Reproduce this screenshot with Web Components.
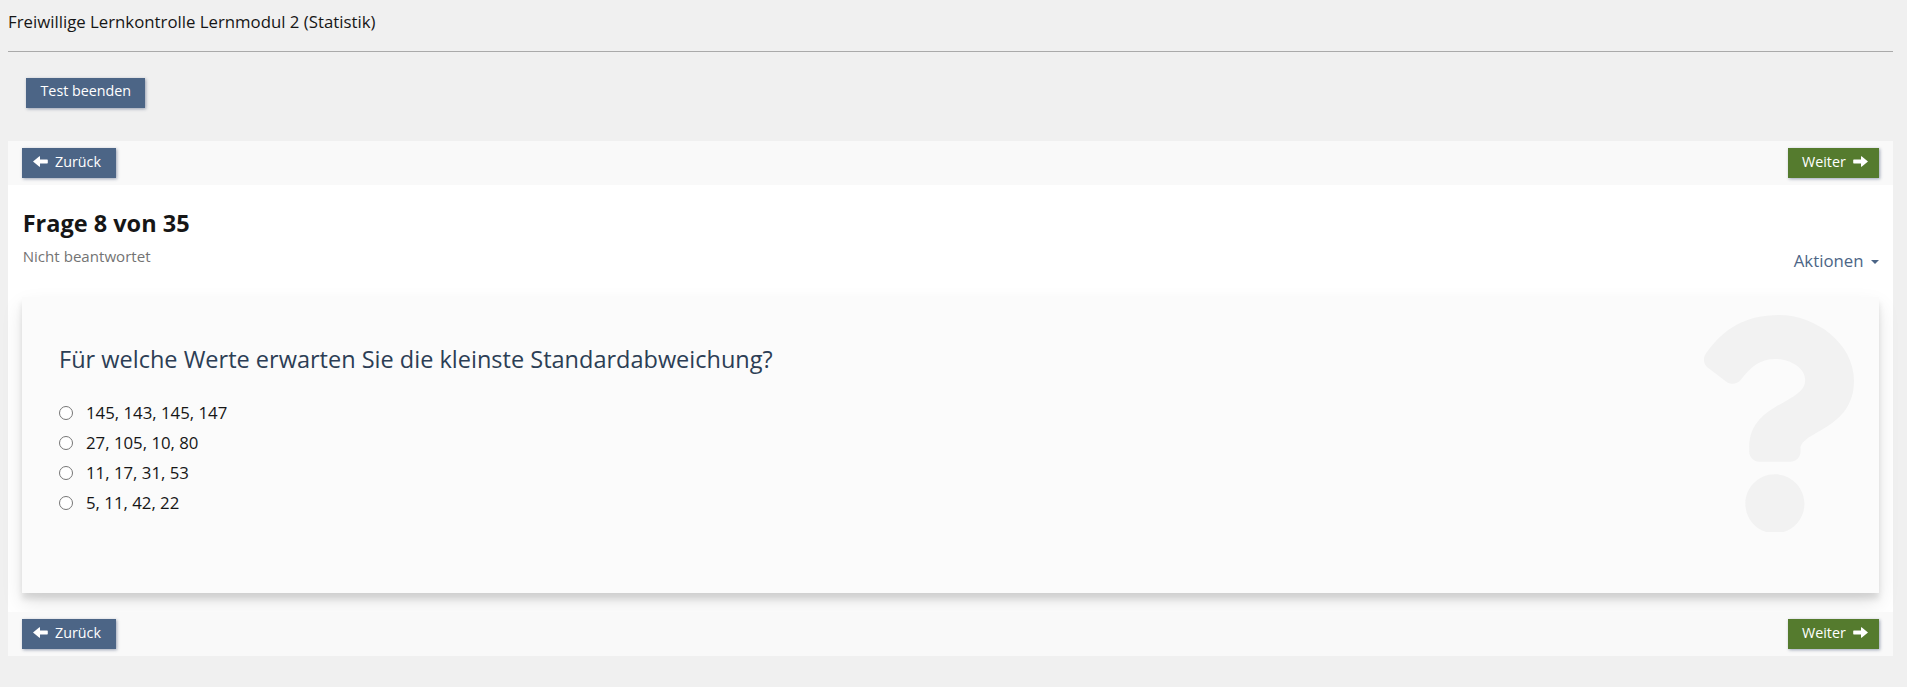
<!DOCTYPE html>
<html lang="de">
<head>
<meta charset="utf-8">
<title>Freiwillige Lernkontrolle</title>
<style>
body { margin: 0; background: #f0f0f0; font: 16.8px/24px "Open Sans", sans-serif; color: #161616; }
</style>
</head>
<body>
<test-page></test-page>
<script>
const define = (name, html) => {
  const tpl = document.createElement('template');
  tpl.innerHTML = html;
  customElements.define(name, class extends HTMLElement {
    constructor() {
      super();
      this.attachShadow({ mode: 'open' }).append(tpl.content.cloneNode(true));
    }
  });
};

define('arrow-icon', `
<style>
:host { display: block; width: 15px; height: 11px; }
:host([right]) { transform: scaleX(-1); }
svg { display: block; fill: #fff; }
</style>
<svg width="15" height="11" viewBox="0 0 15 11"><path d="M0 5.5L6.4 0.2Q7 0 7 .6V3.6H14.2Q14.8 3.6 14.8 4.2V6.8Q14.8 7.4 14.2 7.4H7V10.4Q7 11 6.4 10.8Z"/></svg>`);

define('action-button', `
<style>
:host { display: flex; box-sizing: border-box; height: 30px; padding: 3px 15px 0 11px; background: #4c6586; color: #fff;
  font-size: 14.3px; line-height: 21px; white-space: nowrap; box-shadow: 1px 1px 3px rgba(44,62,100,.45); }
:host([primary]) { padding: 3px 11px 0 14px; background: #557b2e; }
:host([plain]) { padding: 2px 14px 0 14.5px; }
::slotted(arrow-icon) { margin-top: 5px; }
</style>
<slot name="before"></slot><span><slot></slot></span><slot name="after"></slot>`);

define('nav-bar', `
<style>
:host { display: flex; justify-content: space-between; height: 44px; padding: 7px 14px; box-sizing: border-box; background: #f9f9f9; position: relative; }
.back { width: 94px; } .next { width: 91px; justify-content: space-between; }
.back arrow-icon { margin-right: 7px; }
</style>
<action-button class="back"><arrow-icon slot="before"></arrow-icon>Zurück</action-button>
<action-button class="next" primary>Weiter<arrow-icon slot="after" right></arrow-icon></action-button>`);

define('question-head', `
<style>
:host { display: flex; justify-content: space-between; height: 112px; padding: 0 14px; box-sizing: border-box; }
h1 { margin: 21.5px 0 0 .7px; font-size: 23.5px; line-height: 32px; font-weight: 700; }
p { margin: 7.5px 0 0 .7px; font-size: 15.1px; line-height: 20px; color: #737373; }
.menu { display: flex; align-items: flex-start; margin-top: 64px; color: #4c6586; }
i { border: 4px solid transparent; border-top-color: #4c6586; border-bottom: 0; margin: 11px 0 0 7.5px; }
</style>
<div><h1>Frage 8 von 35</h1><p>Nicht beantwortet</p></div>
<div class="menu"><span>Aktionen</span><i></i></div>`);

define('answer-option', `
<style>
:host { display: flex; height: 30px; align-items: flex-start; }
input { width: 14px; height: 14px; margin: 5px 13px 0 0; appearance: none; border: 1px solid #767676; border-radius: 50%; background: #fff; }
</style>
<input type="radio" name="a"><label><slot></slot></label>`);

define('question-card', `
<style>
:host { display: flex; justify-content: space-between; box-sizing: border-box; height: 296px; margin: 0 14px 19px; padding: 0 20px 0 37px;
  background: #fbfbfb; box-shadow: 0 10px 20px rgba(0,0,0,.1), 0 6px 6px rgba(0,0,0,.11); }
h2 { margin: 46px 0 25px; font-size: 23.52px; line-height: 33px; font-weight: 400; color: #2c3e55; }
svg { display: block; margin: 18px 1px 0 0; fill: #f2f2f2; }
</style>
<div><h2><slot name="title"></slot></h2><slot></slot></div>
<svg width="165" height="217" viewBox="0 0 386.9 508.8"><path d="M202.021 0C122.202 0 70.503 32.703 29.914 91.026c-7.363 10.58-5.093 25.086 5.178 32.874l43.138 32.709c10.373 7.865 25.132 6.026 33.253-4.148 25.049-31.381 43.63-49.449 82.757-49.449 30.764 0 68.816 19.799 68.816 49.631 0 22.552-18.617 34.134-48.993 51.164-35.423 19.86-82.299 44.576-82.299 106.405V320c0 13.255 10.745 24 24 24h72.471c13.255 0 24-10.745 24-24v-5.773c0-42.86 125.268-44.645 125.268-160.627C377.504 66.256 286.902 0 202.021 0zM192 373.459c-38.196 0-69.271 31.075-69.271 69.271 0 38.195 31.075 69.27 69.271 69.27s69.271-31.076 69.271-69.27-31.075-69.271-69.271-69.271z"/></svg>`);

define('test-page', `
<style>
:host { display: block; width: 1885px; margin-left: 8px; }
header { height: 52px; padding-top: 10px; box-sizing: border-box; border-bottom: 1px solid #aaa; }
.tools { display: flex; height: 89px; padding: 26px 18px 0; box-sizing: border-box; }
.tools action-button { width: 119px; }
main { background: #fff; display: flow-root; }
</style>
<header>Freiwillige Lernkontrolle Lernmodul 2 (Statistik)</header>
<div class="tools"><action-button plain>Test beenden</action-button></div>
<main>
<nav-bar></nav-bar>
<question-head></question-head>
<question-card><span slot="title">Für welche Werte erwarten Sie die kleinste Standardabweichung?</span>
<answer-option>145, 143, 145, 147</answer-option>
<answer-option>27, 105, 10, 80</answer-option>
<answer-option>11, 17, 31, 53</answer-option>
<answer-option>5, 11, 42, 22</answer-option>
</question-card>
<nav-bar></nav-bar>
</main>`);
</script>
</body>
</html>
